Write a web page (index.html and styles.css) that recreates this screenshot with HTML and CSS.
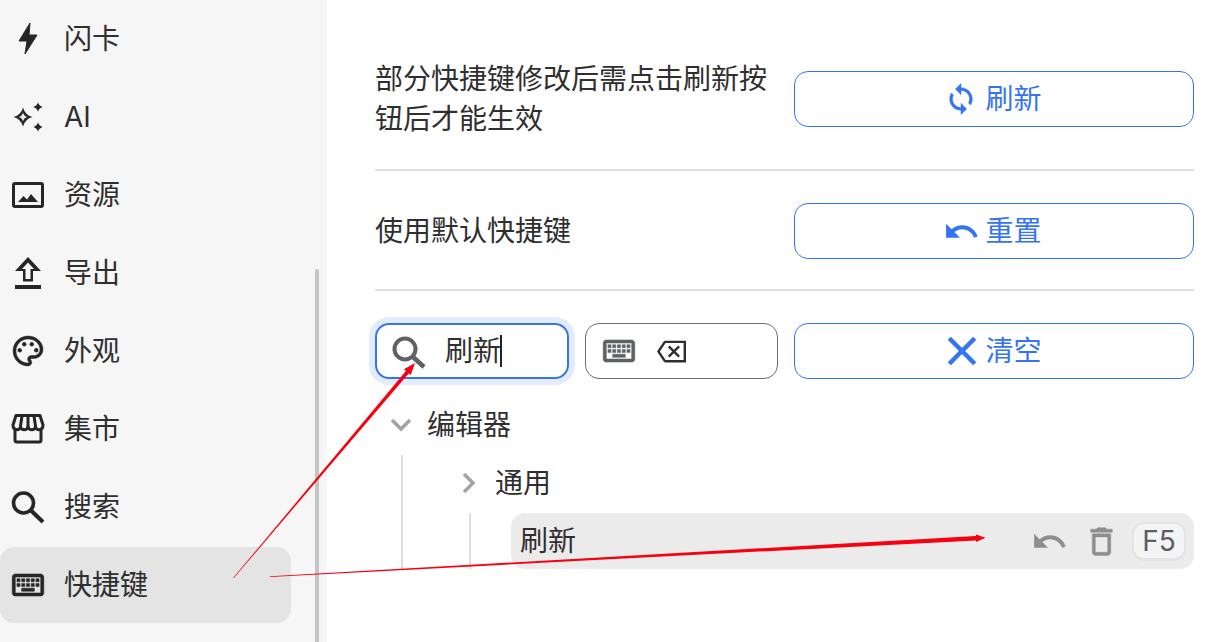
FILE: index.html
```html
<!DOCTYPE html>
<html lang="zh">
<head>
<meta charset="utf-8">
<title>快捷键</title>
<link rel="stylesheet" href="styles.css">
</head>
<body>
<div class="app">
  <aside class="sidebar">
    <div class="nav-item"><span class="nav-icon"><svg class="ic-40" viewBox="0 0 40 40"><path d="M22 4L11 22h8l-2 13 12-19h-8z" stroke="currentColor" stroke-width="1" stroke-linejoin="round"/></svg></span><span class="nav-text">闪卡</span></div>
    <div class="nav-item"><span class="nav-icon"><svg class="ic-40" viewBox="0 0 40 40"><path fill-rule="evenodd" d="M15 10.500Q17 18 24.500 20 17 22 15 29.500 13 22 5.500 20 13 18 15 10.500zM15 15.500Q15.800 19.200 19.500 20 15.800 20.800 15 24.500 14.200 20.800 10.500 20 14.200 19.200 15 15.500z"/><path d="M30 5.300Q31 9 34.700 10 31 11 30 14.700 29 11 25.300 10 29 9 30 5.300zM30 25.300Q31 29 34.700 30 31 31 30 34.700 29 31 25.300 30 29 29 30 25.300z"/></svg></span><span class="nav-text">AI</span></div>
    <div class="nav-item"><span class="nav-icon"><svg class="ic-40" viewBox="0 0 40 40"><rect x="5.500" y="8.500" width="29" height="23" rx="1.500" fill="none" stroke="currentColor" stroke-width="3"/><path d="M10 27l5.500-6 3.500 3.500 4-5.500 7 8z"/></svg></span><span class="nav-text">资源</span></div>
    <div class="nav-item"><span class="nav-icon"><svg class="ic-40" viewBox="0 0 40 40"><path fill-rule="evenodd" d="M20 4l13 14h-8v10.500H15V18H7zM20 9.500L14 16h3.500v10h5V16H26z"/><rect x="7" y="32" width="26" height="4"/></svg></span><span class="nav-text">导出</span></div>
    <div class="nav-item"><span class="nav-icon"><svg class="ic-36 heavy" viewBox="0 0 24 24"><path d="M12 22C6.490 22 2 17.510 2 12S6.490 2 12 2s10 4.040 10 9c0 3.310-2.690 6-6 6h-1.770c-.28 0-.5.22-.5.5 0 .12.05.23.13.33.41.47.64 1.060.64 1.670 0 1.380-1.120 2.500-2.500 2.500zm0-18c-4.410 0-8 3.590-8 8s3.590 8 8 8c.28 0 .5-.22.5-.5 0-.16-.08-.28-.14-.35-.41-.46-.63-1.050-.63-1.650 0-1.380 1.120-2.500 2.500-2.500H16c2.210 0 4-1.790 4-4 0-3.860-3.590-7-8-7z"/><circle cx="6.500" cy="11.500" r="1.300"/><circle cx="9.500" cy="7.500" r="1.300"/><circle cx="14.500" cy="7.500" r="1.300"/><circle cx="17.500" cy="11.500" r="1.300"/></svg></span><span class="nav-text">外观</span></div>
    <div class="nav-item"><span class="nav-icon"><svg class="ic-40 outline" viewBox="0 0 40 40" stroke-width="3" stroke-linejoin="round"><path d="M8 6.500H32L35 16C35 22 27.500 22 27.500 17 27.500 22 20 22 20 17 20 22 12.500 22 12.500 17 12.500 22 5 22 5 16Z"/><path d="M14 7L12.500 17M20 7V17M26 7L27.500 17"/><path d="M7 21V31Q7 33 9 33H31Q33 33 33 31V21"/></svg></span><span class="nav-text">集市</span></div>
    <div class="nav-item"><span class="nav-icon"><svg class="ic-40 outline" viewBox="0 0 40 40" stroke-width="3.600"><circle cx="15.500" cy="16" r="10"/><path d="M23 23.500L35 35" stroke-width="4"/></svg></span><span class="nav-text">搜索</span></div>
    <div class="nav-item active"><span class="nav-icon"><svg class="ic-38 heavy" viewBox="0 0 24 24"><path d="M20 7v10H4V7h16m0-2H4c-1.100 0-1.990.9-1.990 2L2 17c0 1.100.9 2 2 2h16c1.100 0 2-.9 2-2V7c0-1.100-.9-2-2-2zm-9 3h2v2h-2zm0 3h2v2h-2zM8 8h2v2H8zm0 3h2v2H8zm-3 0h2v2H5zm0-3h2v2H5zm3 6h8v2H8zm6-3h2v2h-2zm0-3h2v2h-2zm3 3h2v2h-2zm0-3h2v2h-2z"/></svg></span><span class="nav-text">快捷键</span></div>
    <div class="scrollbar"></div>
  </aside>
  <main class="main">
    <div class="row row-first">
      <div class="row-label">部分快捷键修改后需点击刷新按钮后才能生效</div>
      <div class="btn"><span class="btn-slot"><svg class="ic-34 heavy" viewBox="0 0 24 24"><path d="M12 4V1L8 5l4 4V6c3.310 0 6 2.690 6 6 0 1.010-.25 1.970-.7 2.800l1.460 1.460C19.540 15.030 20 13.570 20 12c0-4.420-3.580-8-8-8zm0 14c-3.310 0-6-2.690-6-6 0-1.010.25-1.970.7-2.800L5.240 7.740C4.460 8.970 4 10.430 4 12c0 4.420 3.580 8 8 8v3l4-4-4-4v3z"/></svg></span><span>刷新</span></div>
    </div>
    <div class="row row-second">
      <div class="row-label">使用默认快捷键</div>
      <div class="btn"><span class="btn-slot"><svg class="ic-37" viewBox="0 0 24 24"><path d="M12.500 8c-2.650 0-5.050.99-6.900 2.600L2 7v9h9l-3.620-3.620c1.390-1.160 3.160-1.880 5.120-1.880 3.540 0 6.550 2.310 7.600 5.500l2.370-.78C21.080 11.030 17.150 8 12.500 8z"/></svg></span><span>重置</span></div>
    </div>
    <div class="row row-third">
      <div class="inputs">
        <div class="search-box">
          <svg class="ic-40 search-ic outline" viewBox="0 0 40 40" stroke-width="4"><circle cx="13" cy="18" r="10.500"/><path d="M20.500 25.500L32 36" stroke-width="4.600"/></svg>
          <span class="search-text">刷新</span><span class="caret"></span>
        </div>
        <div class="key-box">
          <svg class="ic-38 key-ic heavy" viewBox="0 0 24 24"><path d="M20 7v10H4V7h16m0-2H4c-1.100 0-1.990.9-1.990 2L2 17c0 1.100.9 2 2 2h16c1.100 0 2-.9 2-2V7c0-1.100-.9-2-2-2zm-9 3h2v2h-2zm0 3h2v2h-2zM8 8h2v2H8zm0 3h2v2H8zm-3 0h2v2H5zm0-3h2v2H5zm3 6h8v2H8zm6-3h2v2h-2zm0-3h2v2h-2zm3 3h2v2h-2zm0-3h2v2h-2z"/></svg>
          <svg class="ic-29" viewBox="0 0 24 24"><path d="M22 3H7c-.69 0-1.230.35-1.590.88L0 12l5.410 8.110c.36.53.9.89 1.590.89h17V3zm0 16H7.070L2.400 12l4.660-7H22v14zm-11.590-2L14 13.410 17.590 17 19 15.590 15.410 12 19 8.410 17.590 7 14 10.590 10.410 7 9 8.410 12.590 12 9 15.590z"/></svg>
        </div>
      </div>
      <div class="btn"><span class="btn-slot"><svg class="ic-48 close-ic heavy" viewBox="0 0 24 24"><path d="M19 6.410 17.590 5 12 10.590 6.410 5 5 6.410 10.590 12 5 17.590 6.410 19 12 13.410 17.590 19 19 17.590 13.410 12z"/></svg></span><span>清空</span></div>
    </div>
    <div class="tree">
      <div class="tree-head"><span class="chev"><svg viewBox="0 0 24 24" class="ic-24"><path d="M3 7l9 9 9-9" fill="none" stroke="currentColor" stroke-width="3.400"/></svg></span><span>编辑器</span></div>
      <div class="tree-children">
        <div class="tree-head"><span class="chev"><svg viewBox="0 0 24 24" class="ic-24"><path d="M7 3l9 9-9 9" fill="none" stroke="currentColor" stroke-width="3.400"/></svg></span><span>通用</span></div>
        <div class="tree-children">
          <div class="shortcut-row">
            <span class="shortcut-name">刷新</span>
            <svg class="ic-37 tool-ic" viewBox="0 0 24 24"><path d="M12.500 8c-2.650 0-5.050.99-6.900 2.600L2 7v9h9l-3.620-3.620c1.390-1.160 3.160-1.880 5.120-1.880 3.540 0 6.550 2.310 7.600 5.500l2.370-.78C21.080 11.030 17.150 8 12.500 8z"/></svg>
            <svg class="ic-37 tool-ic heavy" viewBox="0 0 24 24"><path d="M6 19c0 1.100.9 2 2 2h8c1.100 0 2-.9 2-2V7H6v12zM8 9h8v10H8V9zm7.500-5l-1-1h-5l-1 1H5v2h14V4z"/></svg>
            <span class="key-chip">F5</span>
          </div>
        </div>
      </div>
    </div>
  </main>
</div>
<svg class="arrows" viewBox="0 0 1220 642" width="1220" height="642">
  <path d="M233.300 577.800L405.900 371 403.900 369.300 415 363 410.700 375.100 408.700 373.400 233.700 578.200Z"/>
  <path d="M270 576.300L976 536 976 534.500 985.500 537.700 976 542 976 540.400 270 576.900Z"/>
</svg>
</body>
</html>
```
FILE: styles.css
```css
* { box-sizing: border-box; }
html, body { margin: 0; height: 642px; overflow: hidden; background: #fff; }
body {
  font-family: "Inter", "Noto Sans CJK SC", sans-serif;
  font-size: 28px;
  line-height: 40px;
  color: #2f2f2f;
}
svg { display: block; fill: currentColor; flex: none; }
svg.outline { fill: none; stroke: currentColor; }
svg.heavy { stroke: currentColor; stroke-width: 0.3px; }
.ic-24 { width: 24px; height: 24px; }
.ic-29 { width: 29px; height: 29px; }
.ic-34 { width: 34px; height: 34px; }
.ic-36 { width: 36px; height: 36px; }
.ic-37 { width: 37px; height: 37px; }
.ic-38 { width: 38px; height: 38px; }
.ic-40 { width: 40px; height: 40px; }
.ic-48 { width: 48px; height: 48px; }

.app { display: flex; height: 642px; }
.sidebar {
  position: relative;
  width: 327px;
  flex: none;
  height: 642px;
  padding-top: 1px;
  background: #f6f6f6;
  display: flex;
  flex-direction: column;
  gap: 2px;
}
.nav-item {
  display: flex;
  align-items: center;
  width: 291px;
  height: 76px;
  flex: none;
  border-radius: 14px;
}
.nav-item.active { background: #e4e4e4; }
.nav-icon { width: 56px; display: flex; justify-content: center; margin-right: 8px; color: #262626; }
.scrollbar {
  position: absolute;
  left: 315px;
  top: 269px;
  bottom: 0;
  width: 4px;
  border-radius: 2px 2px 0 0;
  background: #c4c4c4;
}

.main { flex: 1; padding: 59px 26px 0 48px; min-width: 0; }
.row {
  display: grid;
  grid-template-columns: 1fr 400px;
  column-gap: 19px;
  align-items: center;
}
.row-first { padding-bottom: 30px; border-bottom: 2px solid #dedede; }
.row-second { padding: 32px 0 30px; border-bottom: 2px solid #dedede; }
.row-third { padding-top: 32px; column-gap: 16px; }
.btn {
  height: 56px;
  border: 1.500px solid #3574f0;
  border-radius: 14px;
  color: #3574f0;
  display: flex;
  align-items: center;
  justify-content: center;
  gap: 9px;
}
.btn-slot { width: 30px; display: flex; justify-content: center; }
.close-ic { margin-left: 2px; }

.inputs { display: flex; gap: 16px; }
.search-box {
  width: 194px;
  height: 56px;
  border: 2px solid #3574f0;
  border-radius: 14px;
  box-shadow: 0 0 0 6px #e3ecfd;
  display: flex;
  align-items: center;
  padding-left: 15px;
}
.search-ic { color: #5f6166; }
.search-text { margin-left: 13px; }
.caret { width: 2px; height: 32px; background: #222; margin-left: -1px; }
.key-box {
  width: 193px;
  height: 56px;
  border: 1px solid #6c6c6c;
  border-radius: 14px;
  display: flex;
  align-items: center;
  padding-left: 14px;
  gap: 19px;
}
.key-ic { color: #5f6166; }

.tree { margin-top: 18px; }
.tree-head { display: flex; align-items: center; height: 56px; margin-bottom: 2px; }
.chev { width: 52px; display: flex; justify-content: center; color: #a3a3a6; }
.tree-children { margin-left: 26px; border-left: 2px solid #dedede; padding-left: 40px; }
.shortcut-row {
  display: flex;
  align-items: center;
  height: 56px;
  background: #ebebeb;
  border-radius: 14px;
  padding: 0 8px 0 9px;
}
.shortcut-name { margin-right: auto; }
.tool-ic { color: #8e8e90; margin-right: 15px; }
.key-chip {
  width: 54px;
  height: 39px;
  margin-left: -3px;
  border: 2px solid #e4e4e4;
  border-bottom-width: 3px;
  border-radius: 12px;
  background: #f4f4f4;
  color: #5c5c64;
  display: flex;
  align-items: center;
  justify-content: center;
  font-size: 28px;
}
.arrows { position: absolute; left: 0; top: 0; fill: #f8000f; pointer-events: none; }
```
